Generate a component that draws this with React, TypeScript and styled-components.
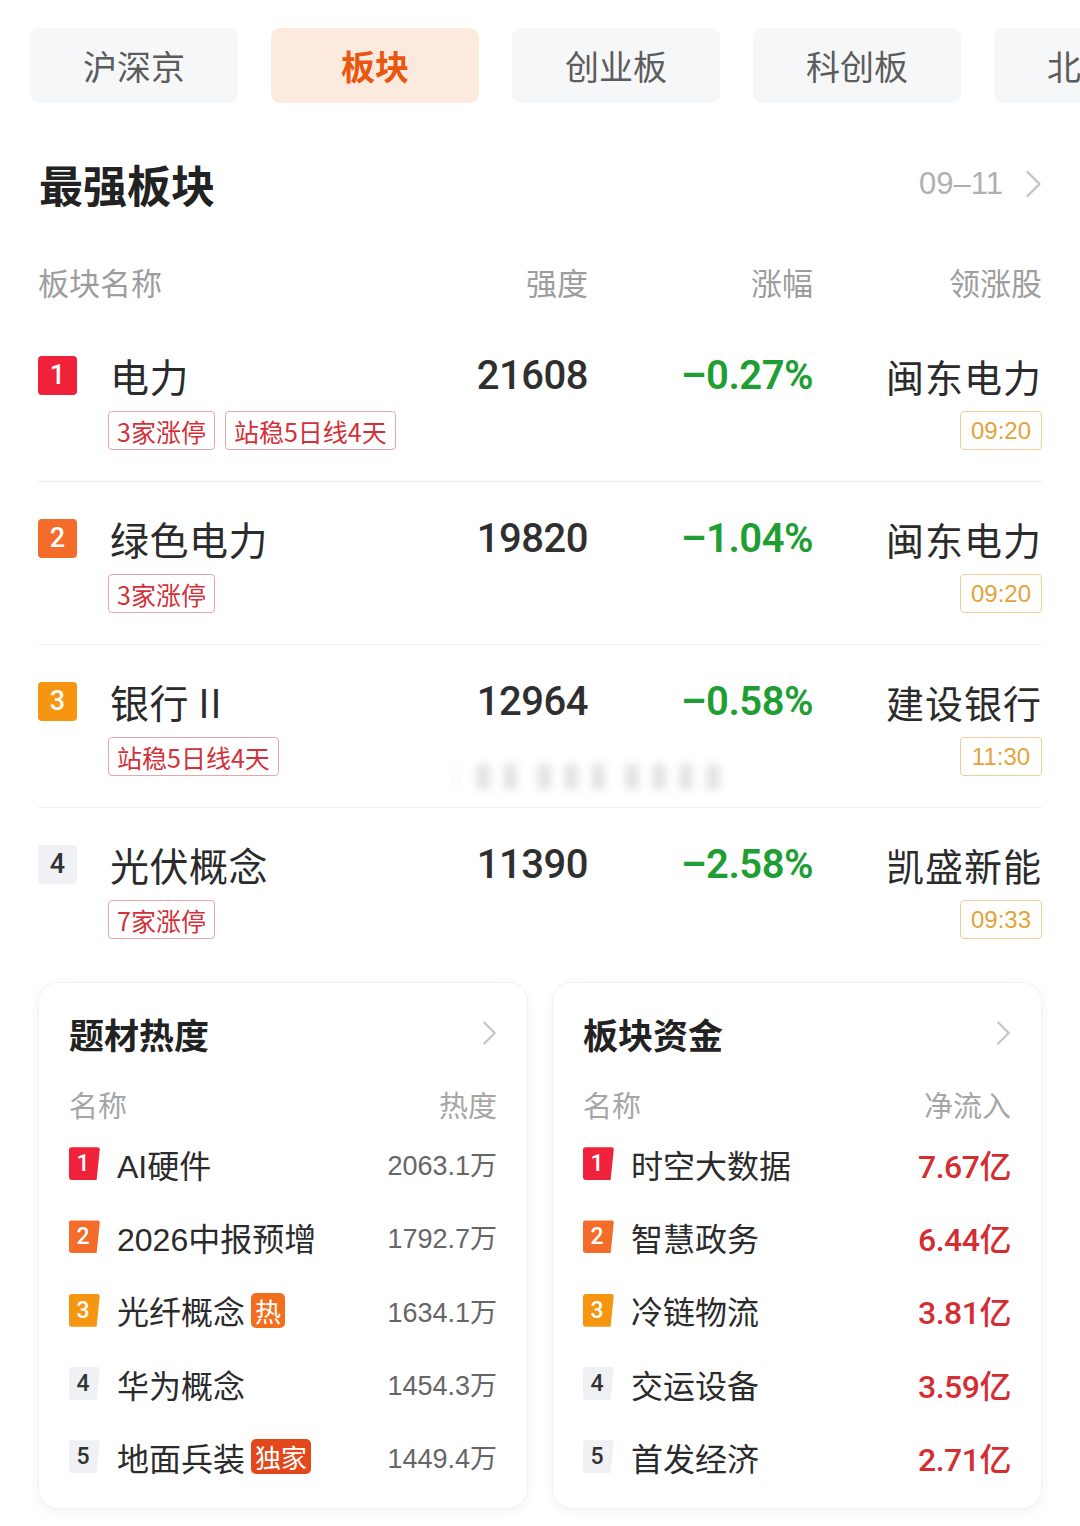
import React from "react";
import styled, { createGlobalStyle } from "styled-components";

const Global = createGlobalStyle`
  html, body { margin: 0; padding: 0; background: #fff; }
  body { font-family: "Noto Sans CJK SC", "Noto Sans", sans-serif; color: #2b2b2b; }
  * { box-sizing: border-box; }
`;

const Page = styled.div`
  width: 1080px;
  height: 1526px;
  overflow: hidden;
  background: #fff;
`;

const Tabs = styled.div`
  display: flex;
  gap: 33px;
  padding: 28px 0 0 30px;
  overflow: hidden;
  white-space: nowrap;
`;

const Tab = styled.div<{ $active?: boolean }>`
  flex: 0 0 208px;
  height: 75px;
  border-radius: 9px;
  display: flex;
  align-items: center;
  justify-content: center;
  font-size: 34px;
  background: ${(p) => (p.$active ? "#fdeadf" : "#f6f7f9")};
  color: ${(p) => (p.$active ? "#e9570e" : "#5c5c5c")};
  font-weight: ${(p) => (p.$active ? 700 : 400)};
`;

const Section = styled.div`
  padding: 0 38px;
`;

const TitleRow = styled.div`
  display: flex;
  align-items: center;
  justify-content: space-between;
  margin-top: 51px;
  height: 60px;
`;

const Title = styled.div`
  font-size: 44px;
  font-weight: 700;
  color: #222;
  padding-left: 1px;
`;

const DateLink = styled.div`
  display: flex;
  align-items: center;
  gap: 22px;
  font-size: 31px;
  color: #b0b0b0;
  font-family: "Liberation Sans", "Noto Sans CJK SC", sans-serif;
`;

const Grid = styled.div`
  display: grid;
  grid-template-columns: 400px 150px 225px 229px;
`;

const HeadRow = styled(Grid)`
  margin-top: 45px;
  height: 40px;
  align-items: center;
  font-size: 31px;
  color: #9d9d9d;
  margin-bottom: 20px;
`;

const HeadCell = styled.div<{ $right?: boolean }>`
  text-align: ${(p) => (p.$right ? "right" : "left")};
`;

const Row = styled.div<{ $last?: boolean }>`
  position: relative;
  padding: 28px 0 ${(p) => (p.$last ? 0 : 31)}px;
  border-bottom: ${(p) => (p.$last ? "none" : "1px solid #eeeeee")};
`;

const RowTop = styled(Grid)`
  height: 50px;
  align-items: center;
`;

const RowBottom = styled(Grid)`
  margin-top: 14px;
  height: 39px;
`;

const NameCell = styled.div`
  display: flex;
  align-items: center;
  gap: 33px;
`;

const rankColors: Record<number, [string, string]> = {
  1: ["#f0213a", "#fff"],
  2: ["#f36c2a", "#fff"],
  3: ["#f6950f", "#fff"],
  4: ["#f0f1f4", "#333"],
  5: ["#f0f1f4", "#333"],
};

const RankBox = styled.div<{ $rank: number }>`
  width: 39px;
  height: 39px;
  border-radius: 4px;
  display: flex;
  align-items: center;
  justify-content: center;
  font-size: 27px;
  font-weight: 500;
  font-family: Roboto, "Liberation Sans", sans-serif;
  background: ${(p) => rankColors[p.$rank][0]};
  color: ${(p) => rankColors[p.$rank][1]};
`;

const Name = styled.div`
  font-size: 39px;
  color: #2b2b2b;
  letter-spacing: 0.5px;
`;

const Num = styled.div`
  text-align: right;
  font-size: 40px;
  font-weight: 500;
  color: #2f2f2f;
  font-family: Roboto, "Liberation Sans", sans-serif;
  letter-spacing: -0.5px;
`;

const Pct = styled(Num)`
  color: #1f9e34;
  font-weight: 600;
`;

const Leader = styled.div`
  text-align: right;
  font-size: 38px;
  color: #2b2b2b;
  letter-spacing: 1px;
`;

const TagList = styled.div`
  display: flex;
  gap: 10px;
  padding-left: 70px;
`;

const Tag = styled.div`
  height: 39px;
  padding: 0 8px;
  border: 1px solid #e6a5a7;
  border-radius: 4px;
  display: flex;
  align-items: center;
  font-size: 25px;
  color: #d3303a;
  background: #fff;
`;

const TimeCell = styled.div`
  grid-column: 4;
  display: flex;
  justify-content: flex-end;
`;

const TimeTag = styled.div`
  height: 39px;
  width: 82px;
  border: 1px solid #ecd09c;
  border-radius: 4px;
  display: flex;
  align-items: center;
  justify-content: center;
  font-size: 24px;
  color: #e2a43a;
  font-family: "Liberation Sans", sans-serif;
`;

const Watermark = styled.div`
  position: absolute;
  left: 405px;
  top: 112px;
  font-size: 26px;
  color: #e2e2e2;
  filter: blur(4px);
  letter-spacing: 1px;
`;

const Cards = styled.div`
  display: grid;
  grid-template-columns: 490px 490px;
  gap: 24px;
  margin-top: 43px;
`;

const Card = styled.div`
  height: 527px;
  border-radius: 20px;
  background: #fff;
  border: 1px solid #f2f2f2;
  box-shadow: 0 3px 14px rgba(0, 0, 0, 0.05);
  padding: 25px 30px 14px 30px;
`;

const CardHead = styled.div`
  display: flex;
  align-items: center;
  justify-content: space-between;
  height: 50px;
`;

const CardTitle = styled.div`
  font-size: 35px;
  font-weight: 700;
  color: #222;
`;

const CardCols = styled.div`
  display: flex;
  justify-content: space-between;
  align-items: center;
  height: 40px;
  margin-top: 26px;
  font-size: 29px;
  color: #a6a6a6;
  margin-bottom: 3px;
`;

const CardRow = styled.div`
  display: flex;
  align-items: center;
  justify-content: space-between;
  height: 73.3px;
`;

const CardName = styled.div`
  display: flex;
  align-items: center;
`;

const SmallRank = styled.div<{ $rank: number }>`
  width: 31px;
  height: 33px;
  border-radius: 3px;
  clip-path: polygon(0 0, 100% 0, 89% 100%, 0 100%);
  display: flex;
  align-items: center;
  justify-content: center;
  padding-right: 3px;
  font-size: 23px;
  font-weight: 500;
  font-family: Roboto, "Liberation Sans", sans-serif;
  background: ${(p) => rankColors[p.$rank][0]};
  color: ${(p) => rankColors[p.$rank][1]};
  margin-right: 17px;
`;

const CardLabel = styled.div`
  font-size: 32px;
  color: #2b2b2b;
  font-family: "Liberation Sans", "Noto Sans CJK SC", sans-serif;
`;

const Hot = styled.div<{ $color: string }>`
  margin-left: 6px;
  height: 35px;
  padding: 0 4px;
  border-radius: 5px;
  background: ${(p) => p.$color};
  color: #fff;
  font-size: 26px;
  display: flex;
  align-items: center;
`;

const HeatVal = styled.div`
  font-size: 27px;
  color: #666;
  font-family: "Liberation Sans", "Noto Sans CJK SC", sans-serif;
`;

const FlowVal = styled.div`
  font-size: 32px;
  font-weight: 500;
  color: #d42e33;
  font-family: Roboto, "Liberation Sans", "Noto Sans CJK SC", sans-serif;
  letter-spacing: -0.5px;
`;

const Chevron = ({ w = 17, h = 28, color = "#c4c4c4" }: { w?: number; h?: number; color?: string }) => (
  <svg width={w} height={h} viewBox="0 0 17 28" fill="none">
    <path d="M2.5 2 L14.5 14 L2.5 26" stroke={color} strokeWidth="2.4" strokeLinecap="round" strokeLinejoin="round" />
  </svg>
);

type Sector = {
  name: string;
  strength: string;
  pct: string;
  leader: string;
  time: string;
  tags: string[];
};

const sectors: Sector[] = [
  { name: "电力", strength: "21608", pct: "–0.27%", leader: "闽东电力", time: "09:20", tags: ["3家涨停", "站稳5日线4天"] },
  { name: "绿色电力", strength: "19820", pct: "–1.04%", leader: "闽东电力", time: "09:20", tags: ["3家涨停"] },
  { name: "银行 II", strength: "12964", pct: "–0.58%", leader: "建设银行", time: "11:30", tags: ["站稳5日线4天"] },
  { name: "光伏概念", strength: "11390", pct: "–2.58%", leader: "凯盛新能", time: "09:33", tags: ["7家涨停"] },
];

const heat = [
  { name: "AI硬件", val: "2063.1万" },
  { name: "2026中报预增", val: "1792.7万" },
  { name: "光纤概念", val: "1634.1万", tag: "热", color: "#f26f1f" },
  { name: "华为概念", val: "1454.3万" },
  { name: "地面兵装", val: "1449.4万", tag: "独家", color: "#e2481c" },
];

const flows = [
  { name: "时空大数据", val: "7.67亿" },
  { name: "智慧政务", val: "6.44亿" },
  { name: "冷链物流", val: "3.81亿" },
  { name: "交运设备", val: "3.59亿" },
  { name: "首发经济", val: "2.71亿" },
];

export default function App() {
  return (
    <Page>
      <Global />
      <Tabs>
        <Tab>沪深京</Tab>
        <Tab $active>板块</Tab>
        <Tab>创业板</Tab>
        <Tab>科创板</Tab>
        <Tab>北交所</Tab>
      </Tabs>
      <Section>
        <TitleRow>
          <Title>最强板块</Title>
          <DateLink>
            09–11
            <Chevron />
          </DateLink>
        </TitleRow>
        <HeadRow>
          <HeadCell>板块名称</HeadCell>
          <HeadCell $right>强度</HeadCell>
          <HeadCell $right>涨幅</HeadCell>
          <HeadCell $right>领涨股</HeadCell>
        </HeadRow>
        {sectors.map((s, i) => (
          <Row key={s.name} $last={i === sectors.length - 1}>
            <RowTop>
              <NameCell>
                <RankBox $rank={i + 1}>{i + 1}</RankBox>
                <Name>{s.name}</Name>
              </NameCell>
              <Num>{s.strength}</Num>
              <Pct>{s.pct}</Pct>
              <Leader>{s.leader}</Leader>
            </RowTop>
            <RowBottom>
              <TagList>
                {s.tags.map((t) => (
                  <Tag key={t}>{t}</Tag>
                ))}
              </TagList>
              <TimeCell>
                <TimeTag>{s.time}</TimeTag>
              </TimeCell>
            </RowBottom>
            {i === 2 && <Watermark>｜ ▌▌ ▌▌▌ ▌▌▌▌</Watermark>}
          </Row>
        ))}
        <Cards>
          <Card>
            <CardHead>
              <CardTitle>题材热度</CardTitle>
              <Chevron w={15} h={26} />
            </CardHead>
            <CardCols>
              <span>名称</span>
              <span>热度</span>
            </CardCols>
            {heat.map((h, i) => (
              <CardRow key={h.name}>
                <CardName>
                  <SmallRank $rank={i + 1}>{i + 1}</SmallRank>
                  <CardLabel>{h.name}</CardLabel>
                  {h.tag && <Hot $color={h.color!}>{h.tag}</Hot>}
                </CardName>
                <HeatVal>{h.val}</HeatVal>
              </CardRow>
            ))}
          </Card>
          <Card>
            <CardHead>
              <CardTitle>板块资金</CardTitle>
              <Chevron w={15} h={26} />
            </CardHead>
            <CardCols>
              <span>名称</span>
              <span>净流入</span>
            </CardCols>
            {flows.map((f, i) => (
              <CardRow key={f.name}>
                <CardName>
                  <SmallRank $rank={i + 1}>{i + 1}</SmallRank>
                  <CardLabel>{f.name}</CardLabel>
                </CardName>
                <FlowVal>{f.val}</FlowVal>
              </CardRow>
            ))}
          </Card>
        </Cards>
      </Section>
    </Page>
  );
}
